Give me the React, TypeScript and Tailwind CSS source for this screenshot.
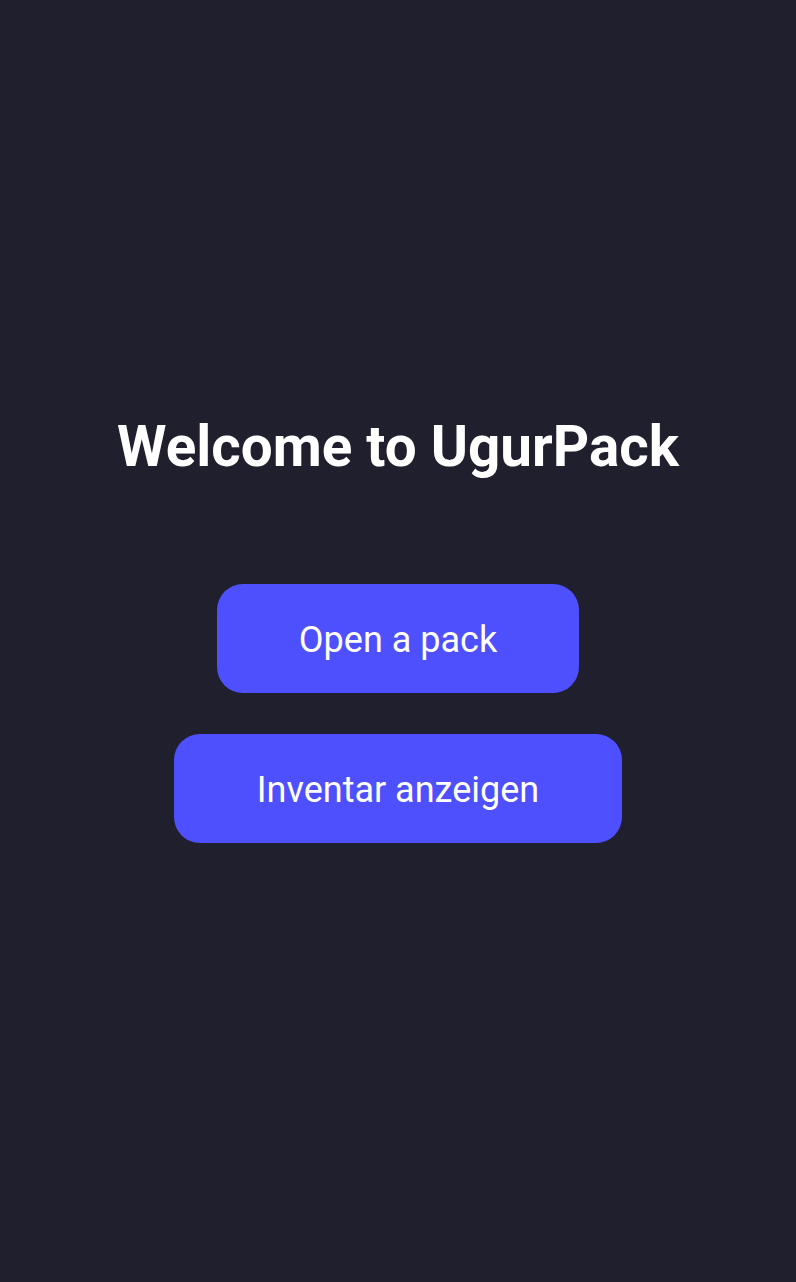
export default function App() {
  return (
    <div
      className="min-h-screen w-full bg-[#1f1f2e] flex flex-col items-center justify-center pb-[24px] text-white"
      style={{ fontFamily: 'Roboto, "Liberation Sans", sans-serif' }}
    >
      <h1 className="text-[56.6px] leading-[64px] font-bold">Welcome to UgurPack</h1>
      <div className="mt-[105px] flex flex-col items-center gap-[41px]">
        <button
          type="button"
          className="h-[109px] px-[82px] pt-[2px] rounded-[26px] bg-[#4f50fd] text-[36px] text-white"
        >
          Open a pack
        </button>
        <button
          type="button"
          className="h-[109px] px-[83px] pt-[2px] rounded-[26px] bg-[#4f50fd] text-[36px] text-white"
        >
          Inventar anzeigen
        </button>
      </div>
    </div>
  );
}
